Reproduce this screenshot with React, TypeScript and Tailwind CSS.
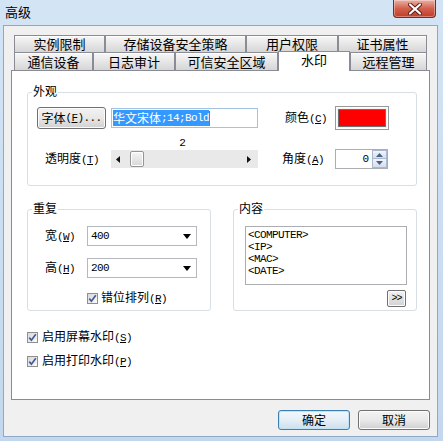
import React from "react";

const MONO = "font-['Liberation_Mono',monospace]";

function Mn({ c }: { c: string }) {
  return (
    <span className={`${MONO} text-[11px] tracking-[-0.6px]`}>
      (<span className="underline underline-offset-1">{c}</span>)
    </span>
  );
}

function Lbl({ zh, m, className = "" }: { zh: string; m: string; className?: string }) {
  return (
    <span className={`whitespace-nowrap text-[12px] leading-[14px] ${className}`}>
      {zh}
      <Mn c={m} />
    </span>
  );
}

function Group({ title, className, children }: { title: string; className: string; children?: React.ReactNode }) {
  return (
    <div className={`relative border border-[#d5dfe5] rounded-[3px] ${className}`}>
      <span className="absolute left-[4px] -top-[9px] bg-white px-[1px] text-[12px] leading-[14px]">{title}</span>
      {children}
    </div>
  );
}

function Check() {
  return (
    <span className="w-[11px] h-[11px] border border-[#8f8f8f] bg-gradient-to-br from-[#d8d8d8] to-[#fbfbfb] flex items-center justify-center shrink-0">
      <svg width="9" height="9" viewBox="0 0 9 9">
        <path d="M1.3 4.6 L3.4 7.2 L7.8 1.2" fill="none" stroke="#42589a" strokeWidth="1.7" />
      </svg>
    </span>
  );
}

function Combo({ value }: { value: string }) {
  return (
    <div className="w-[110px] h-[20px] border border-[#b5b8c0] bg-white flex items-center pl-[3px] pr-[5px]">
      <span className={`${MONO} text-[11px] tracking-[-0.6px] flex-1`}>{value}</span>
      <svg width="8" height="5" viewBox="0 0 8 5">
        <path d="M0 0 H8 L4 5 Z" fill="#000" />
      </svg>
    </div>
  );
}

const row1: [string, number][] = [
  ["实例限制", 91],
  ["存储设备安全策略", 141],
  ["用户权限", 92],
  ["证书属性", 89],
];
const row2: [string, number, boolean?][] = [
  ["通信设备", 79],
  ["日志审计", 82],
  ["可信安全区域", 103],
  ["水印", 72, true],
  ["远程管理", 77],
];

const tabBase =
  "flex items-center justify-center border border-[#898c95] border-b-0 text-[13px] leading-[14px] text-black";
const tabBg = "bg-gradient-to-b from-[#f7f7f7] to-[#d6d6d6] shadow-[inset_0_1px_0_#ffffff]";

function WM({ left, top }: { left: number; top: number }) {
  return (
    <div
      className="absolute w-[240px] text-center font-['Liberation_Serif',serif] font-bold text-[18px] leading-[22px] text-black/[0.025] pointer-events-none whitespace-nowrap"
      style={{ left, top }}
    >
      <div>SHOWALL-PC</div>
      <div>192.168.1.250</div>
      <div>00-1C-C4-A8-C1-2A</div>
      <div>2022/2/23</div>
    </div>
  );
}

export default function App() {
  return (
    <div className="w-[443px] h-[441px] relative overflow-hidden bg-gradient-to-b from-[#d3e4f5] to-[#c3d8ee] font-['Noto_Sans_CJK_SC',sans-serif] text-black">
      {/* title bar */}
      <div className="h-[25px] flex items-center pl-[5px] pb-[1px] text-[13px] leading-[14px]">高级</div>
      <div className="absolute right-[7px] top-0 w-[43px] h-[18px] rounded-b-[4px] border border-t-0 border-[#7a2a20] bg-gradient-to-b from-[#eab0a4] via-[#d2604d] to-[#c23b26] shadow-[inset_0_0_0_1px_rgba(255,255,255,0.35)] flex items-center justify-center">
        <svg width="14" height="12" viewBox="0 0 14 12">
          <path d="M2 1.5 L12 10.5 M12 1.5 L2 10.5" stroke="#5a1a12" strokeWidth="4" strokeLinecap="round" />
          <path d="M2 1.5 L12 10.5 M12 1.5 L2 10.5" stroke="#ffffff" strokeWidth="2.2" strokeLinecap="round" />
        </svg>
      </div>

      {/* client */}
      <div className="ml-[3px] w-[435px] h-[412px] border border-[#8fa8c4] bg-[#f0f0f0] pt-[9px]">
        <div className="ml-[7px] w-[419px]">
          <div className="flex ml-[3px] h-[17px]">
            {row1.map(([t, w]) => (
              <div key={t} className={`${tabBase} ${tabBg} h-[17px]`} style={{ width: w }}>
                {t}
              </div>
            ))}
          </div>
          <div className="flex items-end ml-[3px] h-[18px]">
            {row2.map(([t, w, sel]) =>
              sel ? (
                <div
                  key={t}
                  className={`${tabBase} relative z-10 h-[20px] -mb-[1px] bg-white pb-[3px]`}
                  style={{ width: w }}
                >
                  {t}
                </div>
              ) : (
                <div key={t} className={`${tabBase} ${tabBg} h-[18px]`} style={{ width: w }}>
                  {t}
                </div>
              )
            )}
          </div>

          {/* panel */}
          <div className="w-[419px] h-[330px] border border-[#898c95] bg-white pt-[21px] pl-[15px]">
            <Group title="外观" className="w-[390px] h-[94px]">
              <div className="flex items-center h-[24px] mt-[13px] pl-[9px]">
                <div className="w-[69px] h-[22px] border border-[#707070] rounded-[3px] bg-gradient-to-b from-[#f3f3f3] via-[#e8e8e8] to-[#d0d0d0] shadow-[inset_0_0_0_1px_#fcfcfc] flex items-center justify-center text-[12px] leading-[14px] whitespace-nowrap">
                  字体
                  <Mn c="F" />
                  <span className={`${MONO} text-[11px] tracking-[-0.6px]`}>...</span>
                </div>
                <div className="ml-[5px] w-[147px] h-[20px] border border-[#a4c3e2] bg-white flex items-center pl-[1px]">
                  <span className="bg-[#3399ff] text-white h-[16px] flex items-center text-[12px] leading-[14px] whitespace-nowrap">
                    华文宋体
                    <span className={`${MONO} text-[11px] tracking-[-0.6px]`}>;14;Bold</span>
                  </span>
                  <span className="w-[1px] h-[15px] bg-[#cc6a00]" />
                </div>
                <Lbl zh="颜色" m="C" className="ml-[27px] w-[50px]" />
                <div className="w-[54px] h-[24px] border border-[#9a9a9a] bg-[#f4f4f4] p-[2px] shadow-[inset_0_0_0_1px_#ffffff]">
                  <div className="w-full h-full border border-[#6f6f6f] bg-[#ff0000]" />
                </div>
              </div>
              <div className={`ml-[81px] w-[147px] mt-[7px] h-[12px] text-center ${MONO} text-[11px] leading-[12px]`}>2</div>
              <div className="flex items-center h-[20px] pl-[17px]">
                <Lbl zh="透明度" m="T" className="w-[66px]" />
                <div className="w-[147px] h-[18px] bg-[#e9e9e9] flex items-center">
                  <svg width="4" height="7" viewBox="0 0 4 7" className="ml-[5px]">
                    <path d="M4 0 V7 L0 3.5 Z" fill="#111" />
                  </svg>
                  <div className="ml-[10px] w-[14px] h-[16px] border border-[#959595] rounded-[2px] bg-gradient-to-b from-[#f6f6f6] to-[#d7d7d7] shadow-[inset_0_0_0_1px_#ffffff]" />
                  <svg width="4" height="7" viewBox="0 0 4 7" className="ml-auto mr-[7px]">
                    <path d="M0 0 V7 L4 3.5 Z" fill="#111" />
                  </svg>
                </div>
                <Lbl zh="角度" m="A" className="ml-[24px] w-[53px]" />
                <div className="w-[53px] h-[20px] border border-[#abadb3] bg-white flex">
                  <span className={`flex-1 text-right pr-[3px] ${MONO} text-[11px] leading-[18px]`}>0</span>
                  <div className="w-[15px] flex flex-col">
                    <div className="h-[9px] border border-[#a9b8cf] bg-gradient-to-b from-[#f1f5fb] to-[#d3deee] flex items-center justify-center">
                      <svg width="7" height="4" viewBox="0 0 7 4"><path d="M0 4 H7 L3.5 0 Z" fill="#4d6185" /></svg>
                    </div>
                    <div className="h-[9px] border border-t-0 border-[#a9b8cf] bg-gradient-to-b from-[#f1f5fb] to-[#d3deee] flex items-center justify-center">
                      <svg width="7" height="4" viewBox="0 0 7 4"><path d="M0 0 H7 L3.5 4 Z" fill="#4d6185" /></svg>
                    </div>
                  </div>
                </div>
              </div>
            </Group>

            <div className="flex gap-[22px] mt-[23px]">
              <Group title="重复" className="w-[184px] h-[102px]">
                <div className="flex items-center h-[20px] mt-[16px] pl-[17px]">
                  <Lbl zh="宽" m="W" className="w-[42px]" />
                  <Combo value="400" />
                </div>
                <div className="flex items-center h-[20px] mt-[12px] pl-[17px]">
                  <Lbl zh="高" m="H" className="w-[42px]" />
                  <Combo value="200" />
                </div>
                <div className="flex items-center h-[14px] mt-[13px] pl-[59px] gap-[3px]">
                  <Check />
                  <Lbl zh="错位排列" m="R" />
                </div>
              </Group>
              <Group title="内容" className="w-[184px] h-[102px]">
                <div className={`mt-[16px] ml-[11px] w-[162px] h-[59px] border border-[#abadb3] bg-white pl-[2px] pt-[2px] ${MONO} text-[11px] leading-[12px] tracking-[-0.6px]`}>
                  <div>&lt;COMPUTER&gt;</div>
                  <div>&lt;IP&gt;</div>
                  <div>&lt;MAC&gt;</div>
                  <div>&lt;DATE&gt;</div>
                </div>
                <div className="flex justify-end mt-[5px] pr-[10px]">
                  <div className={`w-[19px] h-[17px] border border-[#707070] rounded-[2px] bg-gradient-to-b from-[#f3f3f3] to-[#d2d2d2] shadow-[inset_0_0_0_1px_#fcfcfc] flex items-center justify-center ${MONO} text-[10px] leading-[10px] tracking-[-1px]`}>
                    &gt;&gt;
                  </div>
                </div>
              </Group>
            </div>

            <div className="flex items-center h-[14px] mt-[19px] gap-[4px]">
              <Check />
              <Lbl zh="启用屏幕水印" m="S" />
            </div>
            <div className="flex items-center h-[14px] mt-[10px] gap-[4px]">
              <Check />
              <Lbl zh="启用打印水印" m="P" />
            </div>
          </div>
        </div>

        {/* buttons */}
        <div className="flex justify-end gap-[8px] pr-[7px] mt-[10px]">
          <div className="w-[72px] h-[20px] border border-[#3c7fb1] rounded-[3px] bg-gradient-to-b from-[#f2f8fc] via-[#e5eff7] to-[#cfdfeb] shadow-[inset_0_0_0_1px_#bfe3f7] flex items-center justify-center text-[12px] leading-[14px]">
            确定
          </div>
          <div className="w-[72px] h-[20px] border border-[#707070] rounded-[3px] bg-gradient-to-b from-[#f3f3f3] via-[#e9e9e9] to-[#d0d0d0] shadow-[inset_0_0_0_1px_#fcfcfc] flex items-center justify-center text-[12px] leading-[14px]">
            取消
          </div>
        </div>
      </div>

      {/* faint watermark */}
      <WM left={141} top={282} />
    </div>
  );
}
